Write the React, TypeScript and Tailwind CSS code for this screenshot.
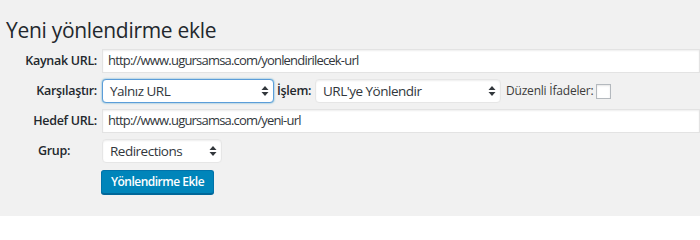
import React from "react";

const font = { fontFamily: '"Open Sans", "Noto Sans", sans-serif' };

const Arrows = () => (
  <svg width="8" height="12" viewBox="0 0 8 12" className="shrink-0">
    <path d="M4 1 L7.5 5 L0.5 5 Z" fill="#32373c" />
    <path d="M4 11 L7.5 7 L0.5 7 Z" fill="#32373c" />
  </svg>
);

const Select = ({ value, className, focused }: { value: string; className: string; focused?: boolean }) => (
  <div
    className={
      "flex h-[24px] shrink-0 items-center justify-between rounded-[4px] border bg-white pl-[7px] pr-[4px] text-[13.5px] tracking-[-0.5px] text-[#32373c] " +
      (focused
        ? "border-[#5b9dd9] shadow-[0_0_2px_rgba(30,140,190,0.8)]"
        : "border-[#e6e6e6] shadow-[inset_0_1px_2px_rgba(0,0,0,0.07)]") +
      " " +
      className
    }
  >
    <span>{value}</span>
    <Arrows />
  </div>
);

const TextInput = ({ value }: { value: string }) => (
  <div className="flex h-[24px] flex-1 items-center border border-[#e3e3e3] bg-white pl-[5px] text-[13px] tracking-[-0.8px] text-[#32373c] shadow-[inset_0_1px_2px_rgba(0,0,0,0.07)]">
    {value}
  </div>
);

const Label = ({ children }: { children: React.ReactNode }) => (
  <div className="w-[97px] shrink-0 text-right text-[12.5px] font-semibold tracking-[-0.3px] text-[#23282d]">{children}</div>
);

export default function App() {
  return (
    <div className="h-[216px] w-[700px] overflow-hidden bg-[#f1f1f1]" style={font}>
      <h2 className="pl-[6px] pt-[16px] text-[21px] leading-[29px] tracking-[-0.3px] text-[#23282d]">Yeni yönlendirme ekle</h2>
      <div className="mt-[4px] flex flex-col">
        <div className="flex items-center gap-[5px]">
          <Label>Kaynak URL:</Label>
          <TextInput value="http://www.ugursamsa.com/yonlendirilecek-url" />
        </div>
        <div className="mt-[6px] flex items-center">
          <Label>Karşılaştır:</Label>
          <Select value="Yalnız URL" className="ml-[5px] w-[172px]" focused />
          <span className="ml-[3px] w-[38px] shrink-0 text-[12.5px] font-semibold tracking-[-0.3px] text-[#23282d]">İşlem:</span>
          <Select value="URL'ye Yönlendir" className="w-[186px]" />
          <span className="ml-[5px] w-[90px] shrink-0 text-[12px] tracking-[-0.2px] text-[#3c3c3c]">Düzenli İfadeler:</span>
          <div className="h-[15px] w-[15px] border border-[#b4b9be] bg-white shadow-[inset_0_1px_2px_rgba(0,0,0,0.1)]" />
        </div>
        <div className="mt-[6px] flex items-center gap-[5px]">
          <Label>Hedef URL:</Label>
          <TextInput value="http://www.ugursamsa.com/yeni-url" />
        </div>
        <div className="mt-[6px] flex items-center">
          <div className="w-[102px] shrink-0 pl-[38px] text-[12.5px] font-semibold tracking-[-0.3px] text-[#23282d]">Grup:</div>
          <Select value="Redirections" className="w-[120px]" />
        </div>
        <div className="mt-[5px] pl-[101px]">
          <button className="h-[24px] w-[113px] rounded-[3px] border border-[#0073aa] border-b-[#006799] bg-[#0085ba] text-[12px] font-semibold tracking-[-0.5px] text-white shadow-[0_1px_0_#006799]">
            Yönlendirme Ekle
          </button>
        </div>
      </div>
    </div>
  );
}
